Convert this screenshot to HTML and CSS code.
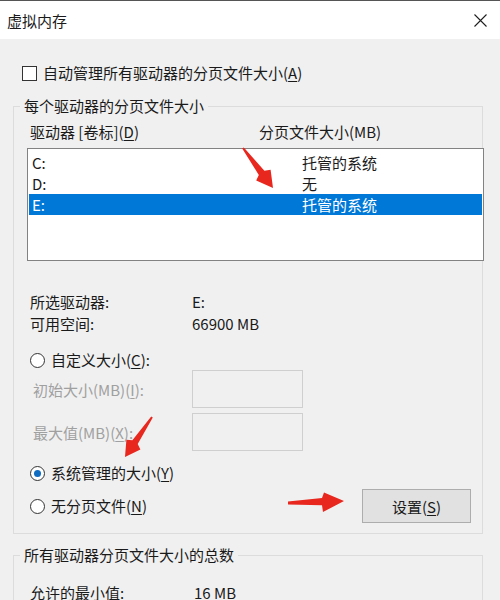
FILE: index.html
```html
<!DOCTYPE html>
<html lang="zh-CN">
<head>
<meta charset="UTF-8">
<meta name="viewport" content="width=device-width, initial-scale=1.0">
<title>虚拟内存</title>
<link rel="stylesheet" href="styles.css">
</head>
<body>
<div class="window">
    <div class="titlebar">
        <span class="title">虚拟内存</span>
        <svg class="close" width="13" height="13" viewBox="0 0 13 13">
            <path d="M0.5 0.5L12.5 12.5M12.5 0.5L0.5 12.5" stroke="#1e1e1e" stroke-width="1.1" fill="none"/>
        </svg>
    </div>

    <div class="content">
        <div class="check-row"><span class="checkbox"></span>自动管理所有驱动器的分页文件大小(<u>A</u>)</div>

        <div class="group">
            <div class="group-title">每个驱动器的分页文件大小</div>
            <div class="list-head">
                <span>驱动器 [卷标](<u>D</u>)</span>
                <span>分页文件大小(MB)</span>
            </div>
            <div class="listbox">
                <div class="list-row"><span>C:</span><span>托管的系统</span></div>
                <div class="list-row"><span>D:</span><span>无</span></div>
                <div class="list-row selected"><span>E:</span><span>托管的系统</span></div>
            </div>

            <div class="info">
                <span>所选驱动器:</span><span>E:</span>
                <span>可用空间:</span><span>66900 MB</span>
            </div>

            <div class="radio-row custom"><span class="radio"></span>自定义大小(<u>C</u>):</div>
            <div class="field-row">
                <span class="field-label">初始大小(MB)(<u>I</u>):</span>
                <span class="field"></span>
            </div>
            <div class="field-row second">
                <span class="field-label">最大值(MB)(<u>X</u>):</span>
                <span class="field"></span>
            </div>

            <div class="radio-row system"><span class="radio checked"></span>系统管理的大小(<u>Y</u>)</div>
            <div class="last-row">
                <div class="radio-row"><span class="radio"></span>无分页文件(<u>N</u>)</div>
                <button class="btn">设置(<u>S</u>)</button>
            </div>
        </div>

        <div class="group total">
            <div class="group-title">所有驱动器分页文件大小的总数</div>
            <div class="info min">
                <span>允许的最小值:</span><span>16 MB</span>
            </div>
        </div>
    </div>

    <!-- red annotation arrows drawn over the dialog -->
    <svg class="arrows" width="500" height="600" viewBox="0 0 500 600">
        <polygon points="243.8,147.4 264.4,170.7 270.6,169.8 273,188 256.2,180.6 258.8,174.9 242.2,148.6"/>
        <polygon points="152.8,417.6 137.7,443.9 140.4,449.4 125,457 126.4,439.8 132.4,440.3 151.2,416.4"/>
        <polygon points="288,501.5 322,498 324,492.5 344,501 323,512 322,505.2 288,504.5"/>
    </svg>
</div>
</body>
</html>
```

FILE: styles.css
```css
body {
    margin: 0;
    font-family: "Noto Sans CJK SC", sans-serif;
    font-size: 15px;
    color: #1a1a1a;
}

.window {
    position: relative;
    width: 500px;
    height: 600px;
    overflow: hidden;
    background-color: #f0f0f0;
}

.titlebar {
    height: 38px;
    border-top: 1px solid #555;
    background-color: #fff;
    display: flex;
    justify-content: space-between;
    align-items: center;
    padding: 0 13px 0 7px;
}

.title {
    line-height: 20px;
    margin-top: 2px;
}

.close {
    margin-top: 1px;
}

.content {
    padding: 25px 17px 0 13px;
}

.check-row {
    display: flex;
    align-items: center;
    height: 18px;
    line-height: 18px;
    margin-left: 9px;
}

.checkbox {
    width: 13px;
    height: 13px;
    border: 1px solid #333;
    background-color: #fff;
    margin-right: 6px;
}

u {
    text-decoration-thickness: 1px;
    text-underline-offset: 2px;
}

.group {
    border: 1px solid #dcdcdc;
    margin-top: 24px;
    padding: 0 10px 10px 16px;
}

.group-title {
    width: fit-content;
    margin: -11px 0 0 -10px;
    padding: 0 4px;
    line-height: 20px;
    background-color: #f0f0f0;
}

.list-head {
    display: grid;
    grid-template-columns: 229px auto;
    margin-top: 6px;
    line-height: 20px;
}

.listbox {
    box-sizing: border-box;
    height: 113px;
    margin: 6px -12px 0 -3px;
    padding: 3px 1px;
    border: 1px solid #828282;
    background-color: #fff;
}

.list-row {
    display: grid;
    grid-template-columns: 270px auto;
    height: 21px;
    line-height: 21px;
    padding-left: 3px;
}

.list-row.selected {
    background-color: #0078d7;
    color: #fff;
}

.info {
    display: grid;
    grid-template-columns: 162px auto;
    margin-top: 30px;
    line-height: 22px;
}

.radio-row {
    display: flex;
    align-items: center;
    line-height: 20px;
}

.radio-row.custom {
    margin-top: 15px;
}

.radio-row.system {
    margin-top: 12px;
}

.radio {
    box-sizing: border-box;
    width: 15px;
    height: 15px;
    border: 1px solid #333;
    border-radius: 50%;
    background-color: #fff;
    margin-right: 6px;
    display: flex;
    justify-content: center;
    align-items: center;
}

.radio.checked::after {
    content: "";
    width: 7px;
    height: 7px;
    border-radius: 50%;
    background-color: #0f6cc0;
}

.field-row {
    display: grid;
    grid-template-columns: 162px 111px;
    align-items: center;
}

.field-row.second {
    margin-top: 5px;
}

.field-label {
    color: #a0a0a0;
    padding-left: 3px;
}

.field {
    height: 36px;
    border: 1px solid #cfcfcf;
    background-color: #f0f0f0;
}

.last-row {
    display: flex;
    justify-content: space-between;
    align-items: center;
    margin-top: 6px;
    padding-right: 1px;
}

.btn {
    width: 109px;
    height: 34px;
    font-family: inherit;
    font-size: 15px;
    color: #1a1a1a;
    background-color: #e1e1e1;
    border: 1px solid #adadad;
    padding: 0;
}

.group.total {
    margin-top: 21px;
}

.info.min {
    grid-template-columns: 164px auto;
    margin-top: 17px;
}

.arrows {
    position: absolute;
    left: 0;
    top: 0;
    pointer-events: none;
    fill: #e8271e;
}
```
